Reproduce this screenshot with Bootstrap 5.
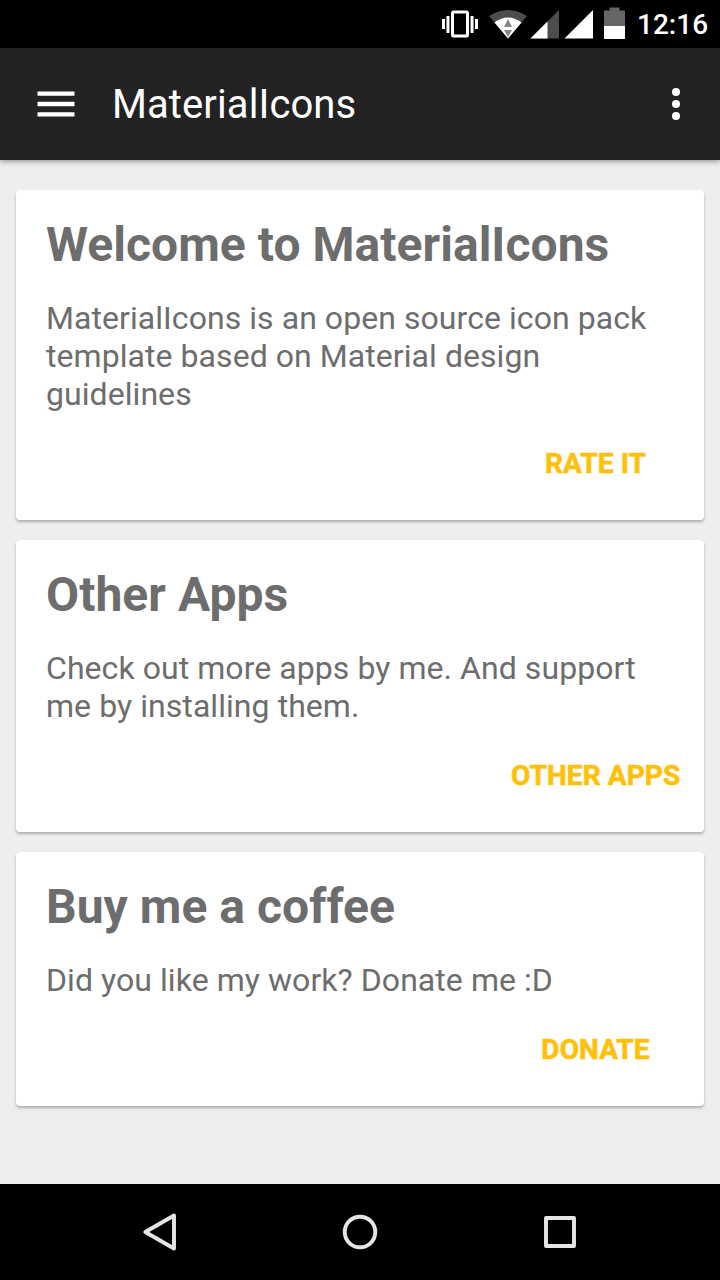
<!DOCTYPE html>
<html lang="en">
<head>
<meta charset="utf-8">
<meta name="viewport" content="width=device-width, initial-scale=1">
<title>MaterialIcons</title>
<link href="https://cdn.jsdelivr.net/npm/bootstrap@5.3.0/dist/css/bootstrap.min.css" rel="stylesheet">
<style>
body{font-family:Roboto,sans-serif;background:#eee;color:#6d6d6d;width:720px;height:1280px;overflow:hidden}
.statusbar{height:48px;background:#000;color:#fff}
.clock{font-size:28px;font-weight:500;line-height:48px;width:72px;padding-top:1px;white-space:nowrap}
.appbar{height:112px;background:#232323;color:#fff;box-shadow:0 1px 6px rgba(0,0,0,.45)}
.apptitle{font-size:40px;line-height:48px;padding-top:2px;letter-spacing:.09px}
.feed{padding:30px 16px 0;gap:20px}
.tile{background:#fff;border:0;border-radius:4px;box-shadow:0 2px 3px rgba(0,0,0,.28);padding:27px 24px 0 30px;color:inherit}
.tile h2{font-size:48px;font-weight:700;line-height:56px;margin:0 0 26px;letter-spacing:.04px}
.tile p{font-size:32px;line-height:38px;margin:0;letter-spacing:.06px}
.action{font-size:28px;font-weight:700;line-height:34px;color:#ffc107;-webkit-text-stroke:.6px #ffc107;background:none;border:0;padding:0;width:169px;white-space:nowrap;text-align:center;margin-top:34px;letter-spacing:.1px}
.sysnav{height:96px;background:#000}
</style>
</head>
<body class="d-flex flex-column">
<div class="statusbar d-flex flex-shrink-0 justify-content-end">
<svg width="205" height="48" viewBox="432 0 205 48"><g fill="#fff"><rect x="452.500" y="12" width="15" height="24" rx="1" fill="none" stroke="#fff" stroke-width="3"/><path d="M442 19h3v10h-3zM446.500 16h3v17h-3zM470.500 16h3v17h-3zM475 19h3v10h-3z"/><path fill="#4d4d4d" d="M489 16Q508 4 527 16L508 38.500z"/><path d="M494.500 22.500Q508 12.500 521.500 22.500L508 38.500z"/><path fill="#858585" d="M508 19l4 8h-8zM504 30h8l-4 7z"/><path fill="#4d4d4d" d="M559 10v28.500h-28.500z"/><path d="M547.500 21.500v17h-17zM593 10v28.500h-28.500z"/><path fill="#666" d="M609.500 7.500h10v3h5.500v15.500h-21V10.500h5.500z"/><path d="M604 26h21v13h-21z"/></g></svg>
<span class="clock">12:16</span><span style="width:11px"></span>
</div>
<header class="appbar d-flex flex-shrink-0 align-items-center">
<svg width="112" height="112"><path d="M37.500 45.700h37M37.500 56h37M37.500 66.300h37" stroke="#fff" stroke-width="4.300"/></svg>
<span class="apptitle">MaterialIcons</span>
<svg class="ms-auto" width="88" height="112" fill="#fff"><circle cx="44" cy="44" r="4"/><circle cx="44" cy="56" r="4"/><circle cx="44" cy="68" r="4"/></svg>
</header>
<main class="feed d-flex flex-column flex-grow-1">
<section class="tile card" style="height:330px"><h2>Welcome to MaterialIcons</h2><p>MaterialIcons is an open source icon pack template based on Material design guidelines</p><button class="action align-self-end">RATE IT</button></section>
<section class="tile card" style="height:292px"><h2>Other Apps</h2><p>Check out more apps by me. And support me by installing them.</p><button class="action align-self-end">OTHER APPS</button></section>
<section class="tile card" style="height:254px"><h2>Buy me a coffee</h2><p>Did you like my work? Donate me :D</p><button class="action align-self-end">DONATE</button></section>
</main>
<nav class="sysnav d-flex flex-shrink-0"><svg width="720" height="96" fill="none" stroke="#e6e6e6" stroke-width="3.900" stroke-linejoin="round"><path d="M174 31.500v33L145.300 48z"/><circle cx="360" cy="48" r="15.300"/><path d="M546 34h28v28h-28z"/></svg></nav>
<script src="https://cdn.jsdelivr.net/npm/bootstrap@5.3.0/dist/js/bootstrap.bundle.min.js"></script>
</body>
</html>
